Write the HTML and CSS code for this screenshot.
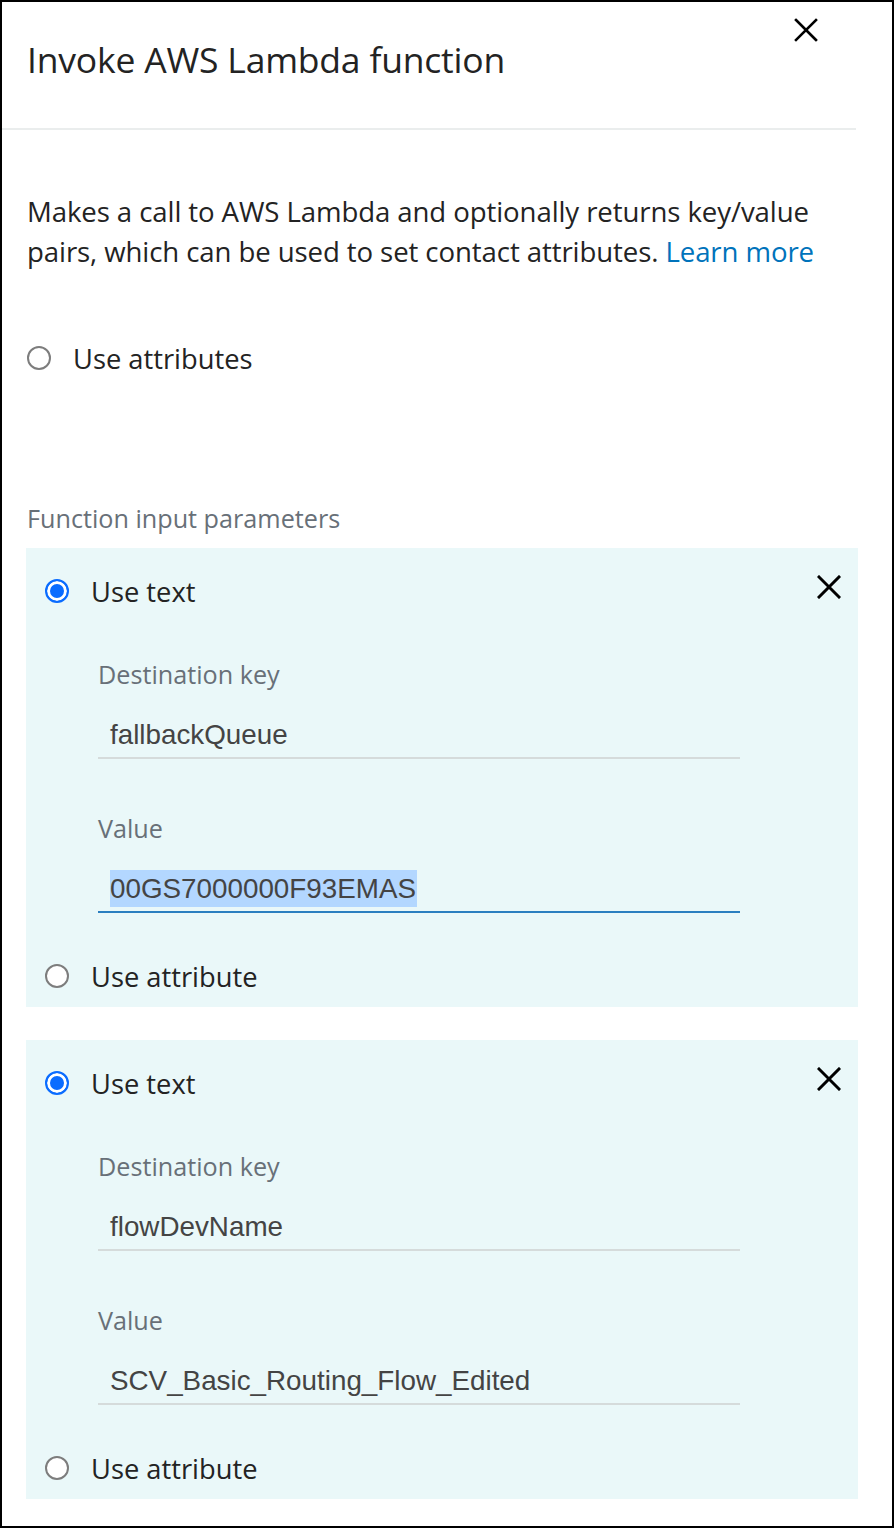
FILE: index.html
```html
<!DOCTYPE html>
<html lang="en">
<head>
<meta charset="utf-8">
<title>Invoke AWS Lambda function</title>
<link rel="stylesheet" href="styles.css">
</head>
<body>
<div class="dialog">
  <header class="dialog-header">
    <h1 class="dialog-title">Invoke AWS Lambda function</h1>
    <button class="close-btn" type="button" aria-label="Close">
      <svg viewBox="0 0 24 24" width="24" height="24"><path d="M2 2L22 22M22 2L2 22" stroke="#000" stroke-width="2.6" stroke-linecap="square" fill="none"/></svg>
    </button>
  </header>

  <div class="dialog-body">
    <p class="description">Makes a call to AWS Lambda and optionally returns key/value pairs, which can be used to set contact attributes. <a class="link" href="#">Learn more</a></p>

    <label class="radio-row top-radio">
      <span class="radio"></span>
      <span class="radio-label">Use attributes</span>
    </label>

    <div class="section-label">Function input parameters</div>

    <div class="param-panel">
      <div class="panel-head">
        <label class="radio-row">
          <span class="radio radio-checked"></span>
          <span class="radio-label">Use text</span>
        </label>
        <button class="remove-btn" type="button" aria-label="Remove">
          <svg viewBox="0 0 24 24" width="24" height="24"><path d="M2 2L22 22M22 2L2 22" stroke="#000" stroke-width="3" stroke-linecap="square" fill="none"/></svg>
        </button>
      </div>
      <div class="field">
        <div class="field-label">Destination key</div>
        <div class="field-input">fallbackQueue</div>
      </div>
      <div class="field field-value">
        <div class="field-label">Value</div>
        <div class="field-input is-focused"><span class="selection">00GS7000000F93EMAS</span></div>
      </div>
      <label class="radio-row panel-foot">
        <span class="radio"></span>
        <span class="radio-label">Use attribute</span>
      </label>
    </div>

    <div class="param-panel">
      <div class="panel-head">
        <label class="radio-row">
          <span class="radio radio-checked"></span>
          <span class="radio-label">Use text</span>
        </label>
        <button class="remove-btn" type="button" aria-label="Remove">
          <svg viewBox="0 0 24 24" width="24" height="24"><path d="M2 2L22 22M22 2L2 22" stroke="#000" stroke-width="3" stroke-linecap="square" fill="none"/></svg>
        </button>
      </div>
      <div class="field">
        <div class="field-label">Destination key</div>
        <div class="field-input">flowDevName</div>
      </div>
      <div class="field field-value">
        <div class="field-label">Value</div>
        <div class="field-input">SCV_Basic_Routing_Flow_Edited</div>
      </div>
      <label class="radio-row panel-foot">
        <span class="radio"></span>
        <span class="radio-label">Use attribute</span>
      </label>
    </div>
  </div>
</div>
</body>
</html>
```

FILE: styles.css
```css
* {
  box-sizing: border-box;
}

html, body {
  margin: 0;
  padding: 0;
  background: #fff;
}

body {
  font-family: "Open Sans", "Noto Sans", "Liberation Sans", sans-serif;
  color: #232323;
}

.dialog {
  width: 894px;
  height: 1528px;
  border: 2px solid #000;
  overflow: hidden;
}

/* header */
.dialog-header {
  display: flex;
  justify-content: space-between;
  align-items: flex-start;
  height: 128px;
  margin-right: 36px;
  border-bottom: 2px solid #eaeded;
}

.dialog-title {
  margin: 37px 0 0 25px;
  font-size: 35.5px;
  font-weight: 400;
  line-height: 40px;
  letter-spacing: -0.2px;
  color: #232323;
}

.close-btn,
.remove-btn {
  border: 0;
  padding: 0;
  background: none;
  width: 24px;
  height: 24px;
  cursor: pointer;
}

.close-btn {
  margin: 16px 38px 0 0;
}

.close-btn svg,
.remove-btn svg {
  display: block;
}

/* body */
.dialog-body {
  padding: 0 34px 0 24px;
}

.description {
  margin: 61px 0 0 1px;
  font-size: 27.6px;
  line-height: 40px;
  letter-spacing: -0.1px;
}

.link {
  color: #0073bb;
  text-decoration: none;
}

.radio-row {
  display: flex;
  align-items: center;
  gap: 22px;
  height: 40px;
}

.top-radio {
  margin: 67px 0 0 1px;
}

.radio {
  flex: none;
  width: 24px;
  height: 24px;
  border-radius: 50%;
  border: 2px solid #7d7d7d;
  background: #fff;
}

.radio-checked {
  border-color: #0a6cff;
  background: #0a6cff;
  box-shadow: inset 0 0 0 3px #fff;
}

.radio-label {
  font-size: 27.3px;
  color: #232323;
}

.section-label {
  margin: 125px 0 15px 1px;
  font-size: 25.2px;
  line-height: 30px;
  color: #687078;
}

/* parameter panels */
.param-panel {
  background: #eaf8f9;
  padding: 23px 17px 11px 19px;
}

.param-panel + .param-panel {
  margin-top: 33px;
}

.panel-head {
  display: flex;
  justify-content: space-between;
  align-items: flex-start;
}

.remove-btn {
  margin-top: 4px;
}

.field {
  margin: 48px 0 0 53px;
  width: 642px;
}

.field-value {
  margin-top: 54px;
}

.field-label {
  font-size: 25.2px;
  line-height: 30px;
  color: #687078;
}

.field-input {
  margin-top: 24px;
  height: 46px;
  padding-left: 12px;
  border-bottom: 2px solid #d5dbdb;
  font-family: "Liberation Sans", Arial, sans-serif;
  font-size: 27.8px;
  line-height: 44px;
  color: #444;
}

.field-input.is-focused {
  border-bottom-color: #2b7fc0;
}

.selection {
  background: #b3d7ff;
  padding: 3px 1px 3px 0;
}

.panel-foot {
  margin-top: 43px;
}
```
